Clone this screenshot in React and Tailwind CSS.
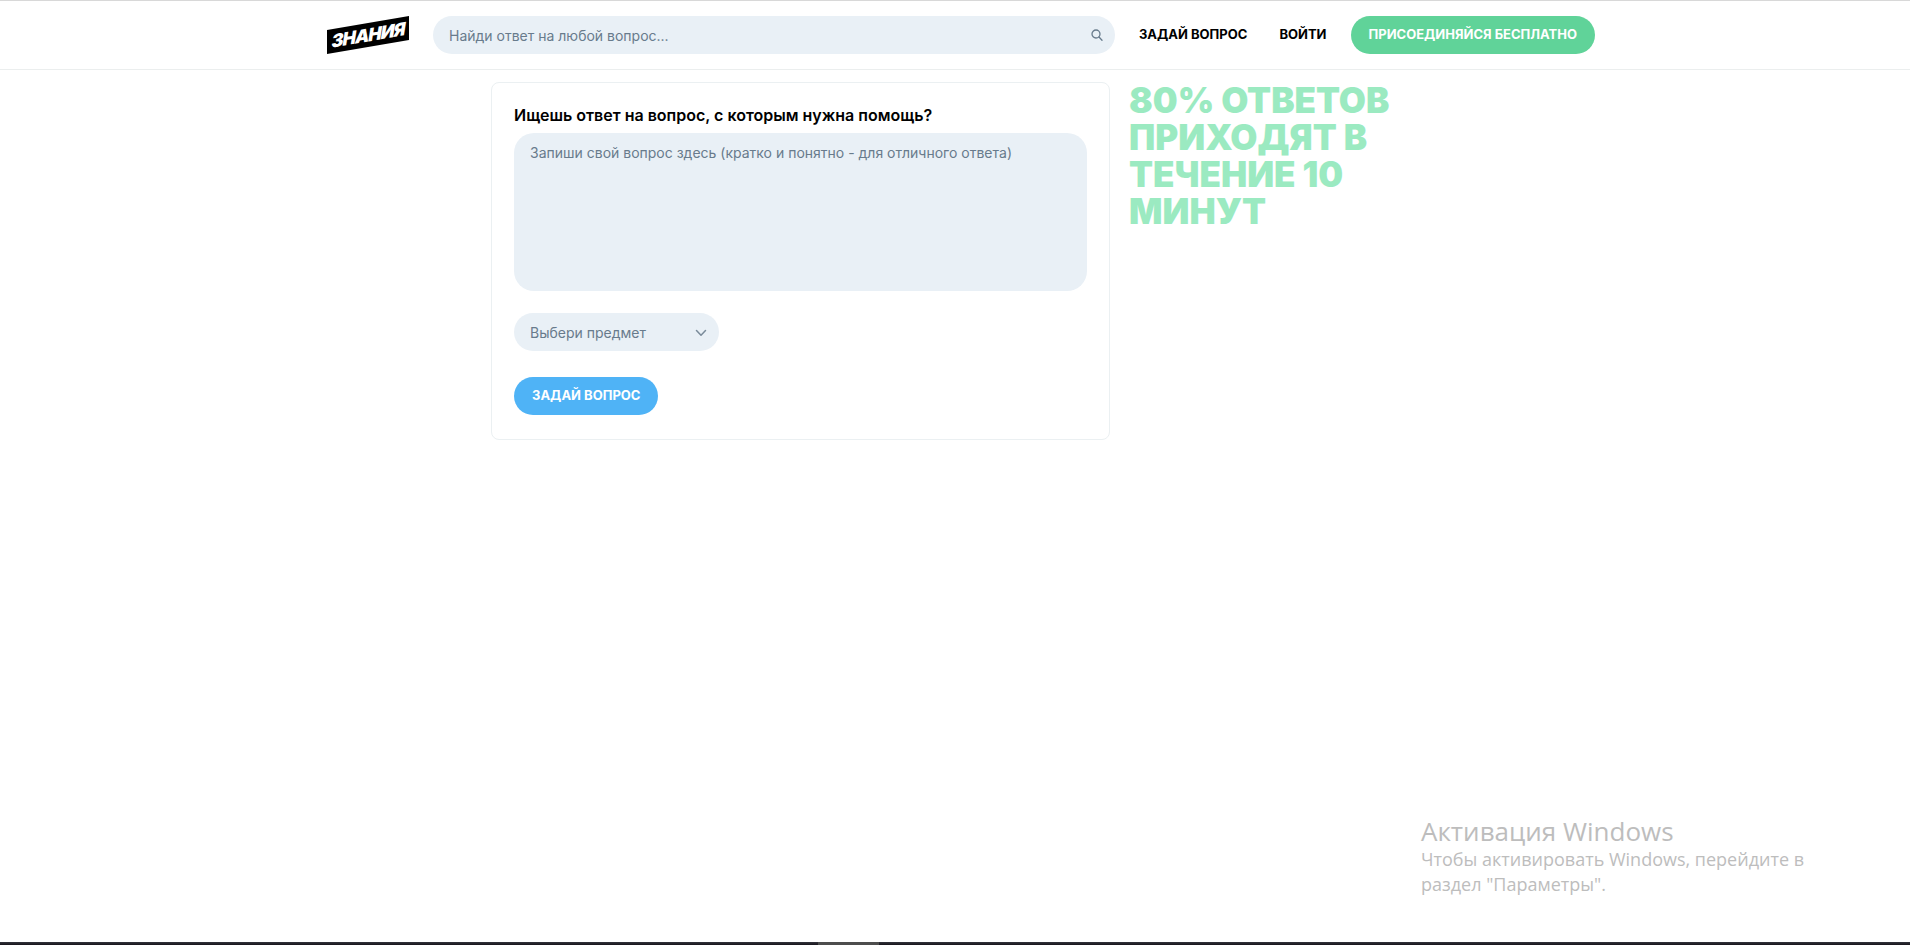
import React from "react";

function Logo() {
  return (
    <svg width="82" height="38" viewBox="0 0 82 38" role="img" aria-label="Знания" className="block">
      <polygon points="0,14 82,0 82,24 0,38" fill="#000" />
      <g transform="translate(0 14) skewY(-9.7)">
        <text
          x="41"
          y="18.5"
          textAnchor="middle"
          fill="#fff"
          fontFamily="Inter, sans-serif"
          fontWeight="900"
          fontStyle="italic"
          fontSize="18"
          letterSpacing="-1"
        >
          ЗНАНИЯ
        </text>
      </g>
    </svg>
  );
}

function SearchIcon() {
  return (
    <svg width="12" height="12" viewBox="0 0 12 12" fill="none" stroke="#687b8c" strokeWidth="1.3" strokeLinecap="round" aria-hidden="true">
      <circle cx="5" cy="5" r="4" />
      <path d="M8 8l3 3.2" />
    </svg>
  );
}

function Header() {
  return (
    <header className="border-t border-b border-t-[#d8d8d8] border-b-[#ebeeee]">
      <div className="mx-auto flex h-17 max-w-[1280px] items-center pl-3">
        <a href="#home" className="shrink-0">
          <Logo />
        </a>
        <form className="relative ml-6 min-w-0 flex-1" role="search">
          <input
            type="search"
            aria-label="Поиск"
            placeholder="Найди ответ на любой вопрос..."
            className="block h-[38px] w-full rounded-full bg-[#e9f0f6] pr-12 pl-4 text-[14px] outline-none placeholder:text-[#687b8c]"
          />
          <button type="button" aria-label="Искать" className="absolute inset-y-0 right-3 flex items-center">
            <SearchIcon />
          </button>
        </form>
        <nav className="ml-6 flex shrink-0 items-center text-[13px] font-bold text-black">
          <a href="#ask">ЗАДАЙ ВОПРОС</a>
          <a href="#login" className="ml-8">ВОЙТИ</a>
          <a href="#join" className="ml-6 flex h-[38px] items-center rounded-full bg-[#60d399] px-[18px] text-white">
            ПРИСОЕДИНЯЙСЯ БЕСПЛАТНО
          </a>
        </nav>
      </div>
    </header>
  );
}

function QuestionForm() {
  return (
    <form className="flex min-w-0 flex-1 flex-col items-start rounded-lg border border-[#ebf0f2] px-[22px] pt-5 pb-6">
      <label htmlFor="question" className="text-[16px] leading-6 font-semibold text-black">
        Ищешь ответ на вопрос, с которым нужна помощь?
      </label>
      <textarea
        id="question"
        placeholder="Запиши свой вопрос здесь (кратко и понятно - для отличного ответа)"
        className="mt-[6px] block h-[158px] w-full resize-none rounded-[20px] bg-[#e9f0f6] px-4 py-2 text-[14px] leading-6 outline-none placeholder:text-[#687b8c]"
      />
      <div className="relative mt-[22px] w-[205px]">
        <select
          aria-label="Предмет"
          className="block h-[38px] w-full appearance-none rounded-full bg-[#e9f0f6] pr-8 pl-4 text-[14px] text-[#687b8c] outline-none"
        >
          <option>Выбери предмет</option>
        </select>
        <svg
          className="pointer-events-none absolute top-4 right-3"
          width="12"
          height="8"
          viewBox="0 0 12 8"
          fill="none"
          stroke="#7a8b9a"
          strokeWidth="1.5"
          strokeLinecap="round"
          strokeLinejoin="round"
          aria-hidden="true"
        >
          <path d="M1.5 1.5L6 6.3l4.500-4.800" />
        </svg>
      </div>
      <button type="button" className="mt-[26px] h-[38px] rounded-full bg-[#4fb3f6] px-[18px] text-[13px] font-bold text-white">
        ЗАДАЙ ВОПРОС
      </button>
    </form>
  );
}

export default function App() {
  return (
    <div className="relative flex min-h-screen flex-col bg-white font-['Inter',sans-serif]">
      <Header />
      <main className="mx-auto flex w-full max-w-[928px] flex-1 items-start pt-3">
        <QuestionForm />
        <h1 className="w-[309px] shrink-0 pl-[19px] text-[35px] leading-[37px] font-black text-[#9beac1]">
          80% ОТВЕТОВ ПРИХОДЯТ В ТЕЧЕНИЕ 10 МИНУТ
        </h1>
      </main>
      <aside className="absolute right-12 bottom-12 w-[441px] font-['Open_Sans',sans-serif] text-[#bdbdbd]">
        <p className="text-[26px] leading-8">Активация Windows</p>
        <p className="text-[18px] leading-[25px]">Чтобы активировать Windows, перейдите в раздел "Параметры".</p>
      </aside>
      <footer className="flex h-[3px] justify-center bg-linear-to-b from-[#34343c] to-[#17151b]">
        <div className="mr-[213px] w-[61px] bg-[#4d4d4d]" />
      </footer>
    </div>
  );
}
